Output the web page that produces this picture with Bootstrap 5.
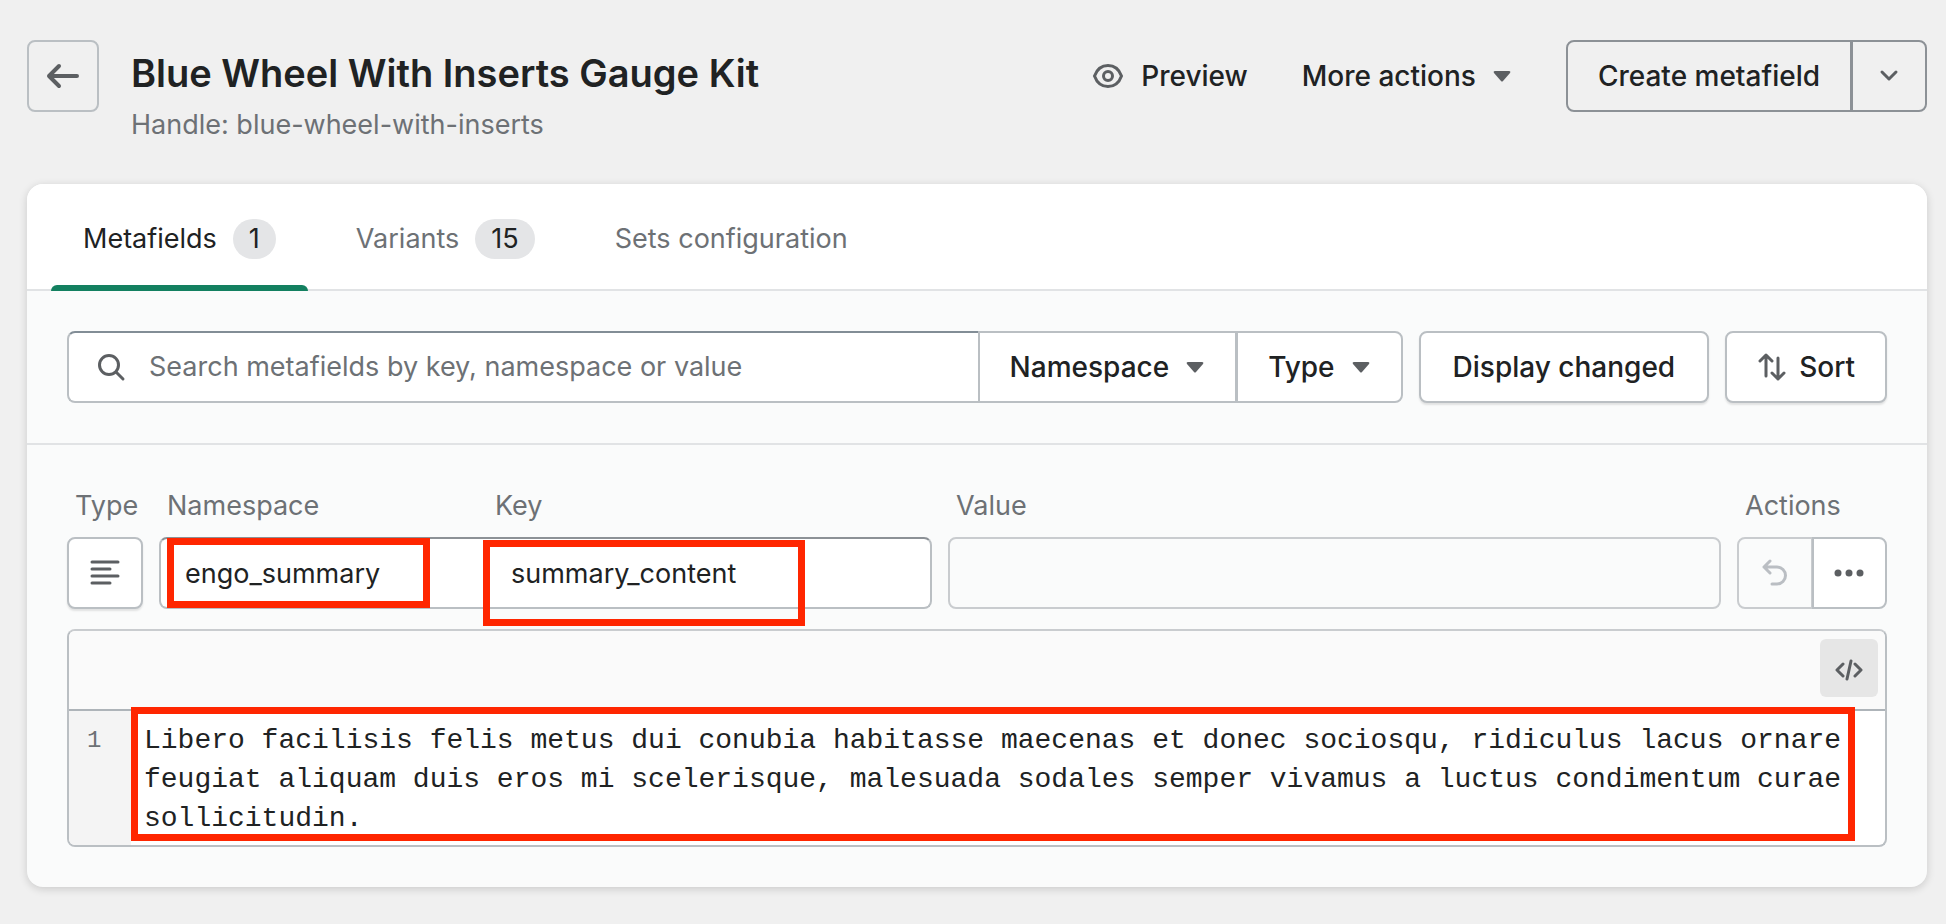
<!DOCTYPE html>
<html lang="en">
<head>
<meta charset="utf-8">
<meta name="viewport" content="width=device-width, initial-scale=1">
<title>Blue Wheel With Inserts Gauge Kit</title>
<link href="https://cdn.jsdelivr.net/npm/bootstrap@5.3.0/dist/css/bootstrap.min.css" rel="stylesheet">
<style>
  :root { --ink: #202223; --muted: #6d7175; --icon: #5c5f62; --line: #babfc3; --soft: #c9cccf; --edge: #8c9196; --surface: #fafbfb; --alert: #ff2600; }
  body { background: #f0f0f0; color: var(--ink); font-family: Inter, "Noto Sans", sans-serif; font-size: 27px; line-height: 40px; }
  .page { padding: 40px 19px 36px 27px; }
  .page-header { min-height: 144px; }
  h1 { font-size: 38px; line-height: 48px; font-weight: 600; margin: 9px 0 0; }
  .subtext { color: var(--muted); line-height: 40px; margin: 8px 0 0; }
  .header-actions { gap: 54px; }
  .control { --bs-btn-font-size: 28px; --bs-btn-line-height: 40px; --bs-btn-font-weight: 500; --bs-btn-color: var(--ink); --bs-btn-bg: #fff; --bs-btn-border-color: var(--line); --bs-btn-disabled-border-color: var(--soft); --bs-btn-disabled-bg: var(--surface); --bs-btn-disabled-opacity: 1; --bs-btn-border-width: 2px; --bs-btn-border-radius: 8px; --bs-btn-padding-x: 30px; --bs-btn-padding-y: 0; --bs-btn-hover-bg: #f6f6f7; --bs-btn-hover-border-color: var(--line); height: 72px; display: inline-flex; align-items: center; justify-content: center; white-space: nowrap; }
  .btn-group > .control:not(:first-child) { margin-left: -2px; }
  .control svg, .plain svg { color: var(--icon); }
  .control:disabled svg { color: #babec3; }
  .clear { --bs-btn-bg: transparent; }
  .outline { --bs-btn-border-color: var(--edge); }
  .raised { box-shadow: 0 2px 2px rgba(0,0,0,.1); }
  .wide { --bs-btn-padding-x: 32px; }
  .square { width: 72px; padding: 0; }
  .btn-group > .square { width: 76px; }
  .plain { border: 0; background: none; padding: 0; font-size: 28px; font-weight: 500; height: 72px; display: inline-flex; align-items: center; color: var(--ink); }
  .panel { border: 0; border-radius: 16px; background: var(--surface); box-shadow: 0 2px 8px rgba(0,0,0,.16); }
  .tabs { background: #fff; border-radius: 16px 16px 0 0; border-bottom: 2px solid #e1e3e5; padding: 0 24px; height: 107px; }
  .tabs a { color: var(--muted); text-decoration: none; height: 107px; display: flex; align-items: center; gap: 16px; padding: 3px 32px 0; }
  .tabs a.active { color: var(--ink); position: relative; }
  .tabs a.active::after { content: ""; position: absolute; left: 0; right: 0; bottom: 0; height: 6px; background: #138060; border-radius: 6px 6px 0 0; }
  .count { background: #e4e5e7; color: var(--ink); border-radius: 20px; padding: 0 16px; font-size: 27px; }
  .filters { padding: 40px; border-bottom: 2px solid #e1e3e5; }
  .search { background: #fff; border: 2px solid var(--line); border-top-color: #828d96; border-right: 0; border-radius: 8px 0 0 8px; height: 72px; padding-left: 27px; gap: 23px; }
  .search input, .pair input, .code { border: 0; outline: 0; background: transparent; color: var(--ink); min-width: 0; }
  .search input::placeholder { color: var(--muted); opacity: 1; }
  .fields { padding: 41px 40px 40px; }
  .fgrid { display: grid; grid-template-columns: 76px 1fr 1fr 150px; column-gap: 16px; color: var(--muted); }
  .flabels { margin-bottom: 11px; }
  .flabel { padding-left: 8px; }
  .twin { display: grid; grid-template-columns: 328px 1fr; }
  .pair { position: relative; background: #fff; border: 2px solid var(--line); border-top-color: var(--edge); border-radius: 8px; height: 72px; }
  .pair input { padding: 2px 0 0 22px; }
  .pair input:first-child { padding-left: 24px; }
  .value { border: 2px solid var(--soft); border-radius: 8px; background: var(--surface); height: 72px; min-width: 0; }
  .mark-box { position: absolute; border: 7px solid var(--alert); pointer-events: none; }
  .mark-ns { left: 6px; top: -1px; width: 263px; height: 70px; }
  .mark-key { left: 322px; top: 1px; width: 322px; height: 86px; }
  .mark-code { left: 0; right: 30px; top: -4px; bottom: 4px; }
  .editor { border: 2px solid var(--line); border-top-color: var(--soft); border-radius: 8px; background: #fff; margin-top: 20px; }
  .toolbar { height: 80px; padding: 8px 7px 0; border-bottom: 2px solid #aeb4b9; background: #fafafa; border-radius: 6px 6px 0 0; }
  .toggle { border: 0; background: #e6e6e6; width: 58px; height: 58px; border-radius: 6px; color: var(--icon); padding: 0; line-height: 1; }
  .gutter { width: 62px; background: #f4f4f4; color: var(--muted); border-radius: 0 0 0 6px; padding: 10px 0 0 18px; }
  .mono { font-family: "Liberation Mono", monospace; font-size: 28px; line-height: 39px; }
  .gutter.mono { font-size: 24px; }
  .code { display: block; width: 100%; padding: 10px 36px 7px 13px; resize: none; overflow: hidden; }
</style>
</head>
<body>
<main class="page">
  <header class="page-header d-flex align-items-start">
    <button class="btn control clear square flex-shrink-0" aria-label="Back">
      <svg width="34" height="34" viewBox="0 0 34 34" fill="none" stroke="currentColor" stroke-width="4" stroke-linecap="round" stroke-linejoin="round"><path d="M31 17H3M13 7L3 17l10 10"/></svg>
    </button>
    <div class="flex-grow-1 ps-4 ms-2">
      <h1>Blue Wheel With Inserts Gauge Kit</h1>
      <p class="subtext">Handle: blue-wheel-with-inserts</p>
    </div>
    <div class="header-actions d-flex align-items-center">
      <button class="plain"><svg class="me-3" width="34" height="28" viewBox="0 0 34 28" fill="none" stroke="currentColor" stroke-width="3"><path d="M3.500 14C6 7 11 3.500 17 3.500S28 7 30.500 14C28 21 23 24.500 17 24.500S6 21 3.500 14Z"/><circle cx="17" cy="14" r="4.500"/></svg>Preview</button>
      <button class="plain">More actions<svg class="ms-3" width="20" height="14" viewBox="0 0 20 14" fill="currentColor"><path d="M3 2h14q2 0 1 2l-7 8q-1 1-2 0L2 4Q1 2 3 2Z"/></svg></button>
      <div class="btn-group">
        <button class="btn control clear outline">Create metafield</button>
        <button class="btn control clear outline square" aria-label="More create options"><svg width="20" height="14" viewBox="0 0 20 14" fill="none" stroke="currentColor" stroke-width="3" stroke-linecap="round" stroke-linejoin="round"><path d="M3 3l7 7 7-7"/></svg></button>
      </div>
    </div>
  </header>

  <section class="card panel">
    <nav class="tabs d-flex gap-3">
      <a href="#metafields" class="active" aria-current="page">Metafields <span class="count">1</span></a>
      <a href="#variants">Variants <span class="count">15</span></a>
      <a href="#sets">Sets configuration</a>
    </nav>

    <div class="filters d-flex gap-3">
      <div class="d-flex flex-grow-1">
        <label class="search d-flex align-items-center flex-grow-1">
          <svg width="30" height="30" viewBox="0 0 30 30" fill="none" stroke="#5c5f62" stroke-width="3" stroke-linecap="round"><circle cx="13" cy="13" r="9.500"/><path d="M20 20l7 7"/></svg>
          <input class="flex-grow-1 p-0" type="search" aria-label="Search metafields" placeholder="Search metafields by key, namespace or value">
        </label>
        <div class="btn-group">
          <button class="btn control rounded-start-0">Namespace<svg class="ms-3" width="20" height="14" viewBox="0 0 20 14" fill="currentColor"><path d="M3 2h14q2 0 1 2l-7 8q-1 1-2 0L2 4Q1 2 3 2Z"/></svg></button>
          <button class="btn control">Type<svg class="ms-3" width="20" height="14" viewBox="0 0 20 14" fill="currentColor"><path d="M3 2h14q2 0 1 2l-7 8q-1 1-2 0L2 4Q1 2 3 2Z"/></svg></button>
        </div>
      </div>
      <button class="btn control raised wide">Display changed</button>
      <button class="btn control raised gap-2"><svg width="30" height="30" viewBox="0 0 30 30" fill="none" stroke="currentColor" stroke-width="3" stroke-linecap="round" stroke-linejoin="round"><path d="M9 24V3M3 9l6-6 6 6M21 6v21M15 21l6 6 6-6"/></svg><span class="ps-1">Sort</span></button>
    </div>

    <div class="fields">
      <div class="fgrid flabels">
        <span class="flabel">Type</span>
        <div class="twin"><label class="flabel" for="ns">Namespace</label><label class="flabel" for="key">Key</label></div>
        <label class="flabel" for="val">Value</label>
        <span class="flabel">Actions</span>
      </div>
      <div class="fgrid">
        <button class="btn control raised px-0" aria-label="Text type"><svg width="30" height="26" viewBox="0 0 30 26" fill="none" stroke="currentColor" stroke-width="3" stroke-linecap="round"><path d="M2 2h26M2 9h18M2 16h26M2 23h18"/></svg></button>
        <div class="pair twin">
          <input id="ns" type="text" value="engo_summary">
          <input id="key" type="text" value="summary_content">
          <span class="mark-box mark-ns"></span>
          <span class="mark-box mark-key"></span>
        </div>
        <input id="val" class="value" type="text" disabled>
        <div class="btn-group">
          <button class="btn control square" disabled aria-label="Undo"><svg width="26" height="28" viewBox="0 0 26 28" fill="none" stroke="currentColor" stroke-width="3" stroke-linecap="round" stroke-linejoin="round"><path d="M8 2L2 8l6 6M2 8h13a8 8 0 0 1 0 17h-5"/></svg></button>
          <button class="btn control square" aria-label="More"><svg width="30" height="8" viewBox="0 0 30 8" fill="currentColor"><circle cx="4" cy="4" r="3.500"/><circle cx="15" cy="4" r="3.500"/><circle cx="26" cy="4" r="3.500"/></svg></button>
        </div>
      </div>

      <div class="editor">
        <div class="toolbar d-flex align-items-start justify-content-end">
          <button class="toggle" aria-label="Toggle code view"><svg width="28" height="22" viewBox="0 0 28 22" fill="none" stroke="currentColor" stroke-width="3" stroke-linecap="round" stroke-linejoin="round"><path d="M8 5l-6 6 6 6M20 5l6 6-6 6M16 2l-4 18"/></svg></button>
        </div>
        <div class="d-flex">
          <div class="gutter mono">1</div>
          <div class="position-relative flex-grow-1">
            <textarea class="code mono" rows="3" aria-label="Metafield content" spellcheck="false">Libero facilisis felis metus dui conubia habitasse maecenas et donec sociosqu, ridiculus lacus ornare feugiat aliquam duis eros mi scelerisque, malesuada sodales semper vivamus a luctus condimentum curae sollicitudin.</textarea>
            <span class="mark-box mark-code"></span>
          </div>
        </div>
      </div>
    </div>
  </section>
</main>
<script src="https://cdn.jsdelivr.net/npm/bootstrap@5.3.0/dist/js/bootstrap.bundle.min.js"></script>
</body>
</html>
